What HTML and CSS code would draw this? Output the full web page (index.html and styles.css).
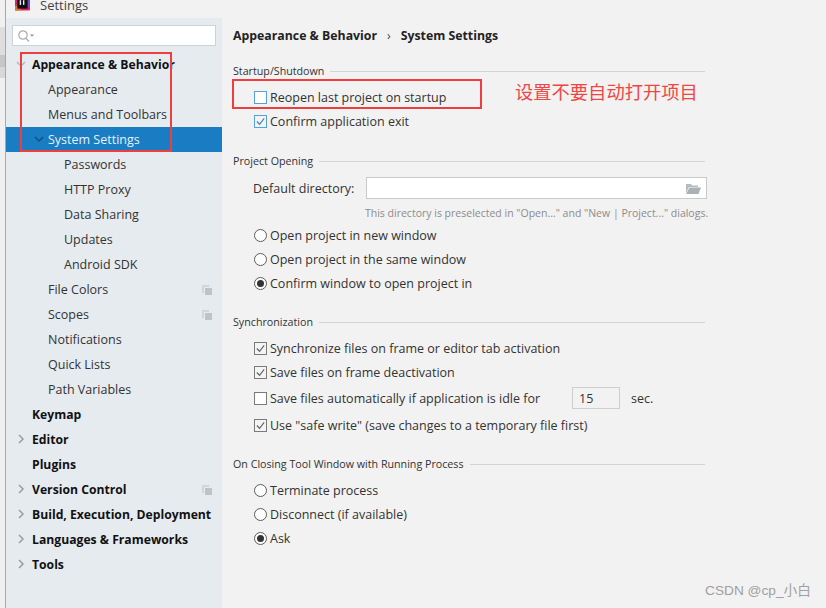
FILE: index.html
```html
<!DOCTYPE html>
<html lang="en">
<head>
<meta charset="utf-8">
<title>Settings</title>
<link rel="stylesheet" href="styles.css">
</head>
<body>
<div class="backdrop">
  <span class="backdrop-a"></span>
  <span class="backdrop-b"></span>
  <span class="backdrop-c"></span>
</div>
<div class="window">
  <header class="titlebar">
    <svg class="logo" width="15" height="16" viewBox="0 0 16 16"><rect x="0" y="0" width="16" height="16" rx="1" fill="#d6246e"/><rect x="3" y="0" width="13" height="12" fill="#6a4fd0"/><rect x="0" y="11" width="6" height="5" fill="#e0762a"/><rect x="2.500" y="0" width="11" height="14" fill="#111"/><rect x="5" y="5" width="1.500" height="5" fill="#eee"/><rect x="8.500" y="5" width="1.500" height="5" fill="#eee"/></svg>
    <span>Settings</span>
  </header>
  <div class="content">
    <aside class="sidebar">
      <div class="search">
        <svg width="18" height="14" viewBox="0 0 18 14"><circle cx="6" cy="6" r="4.200" fill="none" stroke="#a9adb1" stroke-width="1.200"/><path d="M9 9.200l3 3.200" stroke="#a9adb1" stroke-width="1.400"/><path d="M13 5.500h4l-2 2.200z" fill="#8d9195"/></svg>
      </div>
      <nav class="tree">
        <div class="row bold l0"><svg class="arrow" viewBox="0 0 10 10"><path d="M1 3l4 4 4-4" fill="none" stroke="#b4b7ba" stroke-width="1.500"/></svg>Appearance &amp; Behavior</div>
        <div class="row l1">Appearance</div>
        <div class="row l1">Menus and Toolbars</div>
        <div class="row l1 selected"><svg class="arrow" viewBox="0 0 10 10"><path d="M1 3l4 4 4-4" fill="none" stroke="#0f4f85" stroke-width="1.500"/></svg>System Settings</div>
        <div class="row l2">Passwords</div>
        <div class="row l2">HTTP Proxy</div>
        <div class="row l2">Data Sharing</div>
        <div class="row l2">Updates</div>
        <div class="row l2">Android SDK</div>
        <div class="row l1">File Colors<svg class="copy" viewBox="0 0 10 10"><path d="M0 0h7v2H2v6H0z" fill="#d3d6d9"/><rect x="3" y="3" width="7" height="7" fill="#bfc3c6"/></svg></div>
        <div class="row l1">Scopes<svg class="copy" viewBox="0 0 10 10"><path d="M0 0h7v2H2v6H0z" fill="#d3d6d9"/><rect x="3" y="3" width="7" height="7" fill="#bfc3c6"/></svg></div>
        <div class="row l1">Notifications</div>
        <div class="row l1">Quick Lists</div>
        <div class="row l1">Path Variables</div>
        <div class="row bold l0">Keymap</div>
        <div class="row bold l0"><svg class="arrow" viewBox="0 0 10 10"><path d="M3 1l4 4-4 4" fill="none" stroke="#9a9d9f" stroke-width="1.500"/></svg>Editor</div>
        <div class="row bold l0">Plugins</div>
        <div class="row bold l0"><svg class="arrow" viewBox="0 0 10 10"><path d="M3 1l4 4-4 4" fill="none" stroke="#9a9d9f" stroke-width="1.500"/></svg>Version Control<svg class="copy" viewBox="0 0 10 10"><path d="M0 0h7v2H2v6H0z" fill="#d3d6d9"/><rect x="3" y="3" width="7" height="7" fill="#bfc3c6"/></svg></div>
        <div class="row bold l0"><svg class="arrow" viewBox="0 0 10 10"><path d="M3 1l4 4-4 4" fill="none" stroke="#9a9d9f" stroke-width="1.500"/></svg>Build, Execution, Deployment</div>
        <div class="row bold l0"><svg class="arrow" viewBox="0 0 10 10"><path d="M3 1l4 4-4 4" fill="none" stroke="#9a9d9f" stroke-width="1.500"/></svg>Languages &amp; Frameworks</div>
        <div class="row bold l0"><svg class="arrow" viewBox="0 0 10 10"><path d="M3 1l4 4-4 4" fill="none" stroke="#9a9d9f" stroke-width="1.500"/></svg>Tools</div>
      </nav>
    </aside>
    <main class="panel">
      <div class="crumbs"><b>Appearance &amp; Behavior</b><span class="sep">›</span><b>System Settings</b></div>

      <section class="group g-startup">
        <div class="legend"><span>Startup/Shutdown</span><i></i></div>
        <div class="opt"><span class="check blue"></span>Reopen last project on startup</div>
        <div class="opt"><span class="check blue on"><svg viewBox="0 0 12 12"><path d="M2 6l3 3 5-6.500" fill="none" stroke="#3d88c7" stroke-width="1.300"/></svg></span>Confirm application exit</div>
      </section>

      <section class="group g-opening">
        <div class="legend"><span>Project Opening</span><i></i></div>
        <div class="dir"><label>Default directory:</label><div class="field"><svg width="15" height="11" viewBox="0 0 15 11"><path d="M0 1h5l1 1.500h6v1.500H3L0 10z" fill="#b4bcc2"/><path d="M3.500 4.500H15L12.500 11H0z" fill="#a9b2b9"/></svg></div></div>
        <p class="hint">This directory is preselected in "Open..." and "New | Project..." dialogs.</p>
        <div class="opt"><span class="radio"></span>Open project in new window</div>
        <div class="opt"><span class="radio"></span>Open project in the same window</div>
        <div class="opt"><span class="radio on"></span>Confirm window to open project in</div>
      </section>

      <section class="group g-sync">
        <div class="legend"><span>Synchronization</span><i></i></div>
        <div class="opt"><span class="check on"><svg viewBox="0 0 12 12"><path d="M2 6l3 3 5-6.500" fill="none" stroke="#666" stroke-width="1.300"/></svg></span>Synchronize files on frame or editor tab activation</div>
        <div class="opt"><span class="check on"><svg viewBox="0 0 12 12"><path d="M2 6l3 3 5-6.500" fill="none" stroke="#666" stroke-width="1.300"/></svg></span>Save files on frame deactivation</div>
        <div class="opt idle"><span class="check"></span><span class="idle-label">Save files automatically if application is idle for</span><span class="num">15</span><span>sec.</span></div>
        <div class="opt safe"><span class="check on"><svg viewBox="0 0 12 12"><path d="M2 6l3 3 5-6.500" fill="none" stroke="#666" stroke-width="1.300"/></svg></span>Use "safe write" (save changes to a temporary file first)</div>
      </section>

      <section class="group g-closing">
        <div class="legend"><span>On Closing Tool Window with Running Process</span><i></i></div>
        <div class="opt"><span class="radio"></span>Terminate process</div>
        <div class="opt"><span class="radio"></span>Disconnect (if available)</div>
        <div class="opt"><span class="radio on"></span>Ask</div>
      </section>
    </main>
  </div>
</div>
<div class="mark mark-tree"></div>
<div class="mark mark-opt"></div>
<div class="note">设置不要自动打开项目</div>
<div class="watermark">CSDN @cp_小白</div>
</body>
</html>
```
FILE: styles.css
```css
* { box-sizing: border-box; }
html, body { margin: 0; padding: 0; }
body {
  width: 826px; height: 608px; overflow: hidden; position: relative;
  display: flex; background: #f2f2f2; color: #2b2b2b;
  font-family: "Open Sans", "Noto Sans CJK SC", sans-serif; font-size: 12.5px;
}
.backdrop { width: 6px; flex: none; background: #f0f0f0; border-right: 1px solid #a8a8a8; display: flex; flex-direction: column; }
.backdrop-a { height: 28px; margin-top: 27px; background: #dedede; }
.backdrop-b { height: 12px; background: #c6c6c6; }
.backdrop-c { height: 11px; background: #d8d8d8; }
.window { flex: 1; display: flex; flex-direction: column; min-width: 0; }
.titlebar { height: 18px; display: flex; align-items: flex-start; gap: 10px; padding-left: 9px; font-size: 13px; line-height: 11px; color: #444; overflow: hidden; }
.logo { margin-top: -5px; flex: none; }
.content { flex: 1; display: flex; min-height: 0; }
.sidebar { width: 216px; flex: none; background: #e6ebf0; padding-top: 7px; }
.search { height: 21px; margin: 0 6px 0 6px; background: #fff; border: 1px solid #cfd2d4; display: flex; align-items: center; padding-left: 4px; }
.tree { margin-top: 6px; }
.row { height: 25px; display: flex; align-items: center; position: relative; color: #333; white-space: nowrap; }
.bold { font-weight: 700; font-size: 12.2px; color: #111; }
.l0 { padding-left: 26px; }
.l1 { padding-left: 42px; }
.l2 { padding-left: 58px; }
.selected { background: #1a7cc3; color: #e6f2fb; }
.arrow { position: absolute; width: 10px; height: 10px; left: 10px; top: 7px; }
.l1 .arrow { left: 28px; }
.copy { position: absolute; width: 10px; height: 10px; left: 196px; top: 8px; }
.panel { flex: 1; min-width: 0; padding: 0 0 0 11px; }
.crumbs { height: 18px; margin-top: 8px; display: flex; align-items: center; font-size: 12.3px; color: #222; }
.crumbs .sep { margin: 0 10px; color: #444; }
.group { width: 472px; }
.g-startup { margin-top: 20px; }
.g-opening { margin-top: 21px; }
.g-sync { margin-top: 20px; }
.g-closing { margin-top: 20px; }
.legend { display: flex; align-items: center; gap: 6px; height: 14px; margin-bottom: 7px; font-size: 10.7px; color: #333; }
.legend i { flex: 1; height: 1px; background: #d4d4d4; }
.opt { height: 24px; display: flex; align-items: center; margin-left: 21px; white-space: nowrap; color: #333; }
.idle { margin-top: 2px; }
.safe { margin-top: 3px; }
.check { width: 13px; height: 13px; margin-right: 3px; flex: none; border: 1px solid #7a7a7a; background: #fff; display: block; }
.check.on { background: #f4f4f4; }
.check.blue { border-color: #5aa0d8; }
.check svg { display: block; width: 11px; height: 11px; }
.radio { width: 13px; height: 13px; margin-right: 3px; flex: none; border: 1px solid #5c5c5c; border-radius: 50%; background: #fff; position: relative; }
.radio.on::after { content: ""; position: absolute; inset: 2px; border-radius: 50%; background: #333; }
.dir { display: flex; align-items: center; margin: 9px 0 0 20px; }
.dir label { width: 113px; flex: none; color: #333; }
.field { width: 341px; height: 22px; flex: none; background: #fff; border: 1px solid #c9c9c9; display: flex; align-items: center; justify-content: flex-end; padding-right: 5px; }
.hint { margin: 6px 0 2px 132px; font-size: 10.5px; line-height: 16px; color: #8c8c8c; white-space: nowrap; }
.idle-label { width: 302px; flex: none; }
.num { width: 48px; height: 22px; border: 1px solid #cfcfcf; padding-left: 6px; margin-right: 11px; display: flex; align-items: center; flex: none; }
.mark { position: absolute; border: 2px solid #ee3e3e; }
.mark-tree { left: 20px; top: 52px; width: 152px; height: 100px; }
.mark-opt { left: 232px; top: 79px; width: 250px; height: 30px; }
.note { position: absolute; left: 515px; top: 78px; font-size: 18.3px; line-height: 26px; color: #f04545; font-family: "Noto Sans CJK SC", sans-serif; }
.watermark { position: absolute; left: 705px; top: 582px; font-size: 13.7px; line-height: 18px; color: #a0a0a0; font-family: "Liberation Sans", "Noto Sans CJK SC", sans-serif; }
```
